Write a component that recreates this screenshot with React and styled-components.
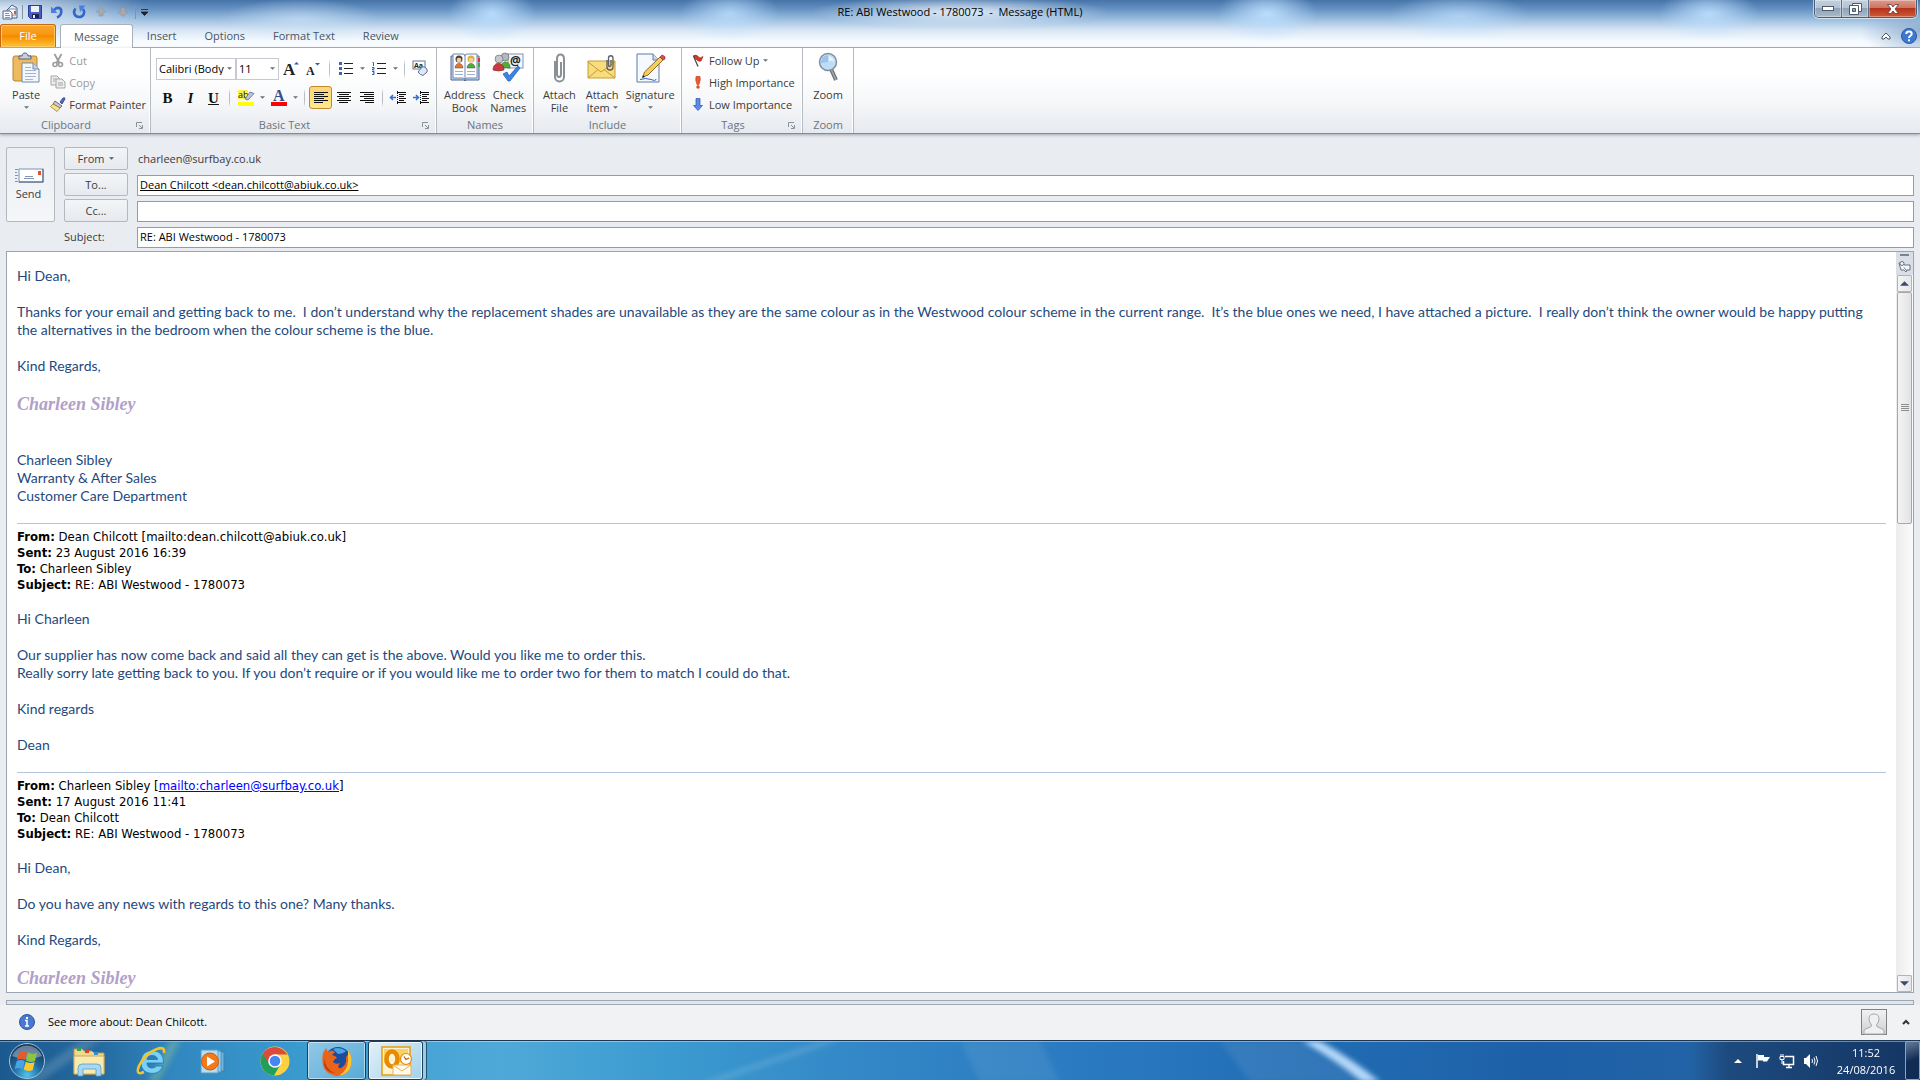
import React, { Fragment, useState } from 'react';
import styled, { createGlobalStyle, css } from 'styled-components';

const UI_FONT = `'Open Sans', 'Noto Sans', sans-serif`;
const BODY_FONT = `Lato, 'Open Sans', sans-serif`;
const HEADER_FONT = `'DejaVu Sans Condensed', 'DejaVu Sans', sans-serif`;

const GlobalStyle = createGlobalStyle`
    * {
        box-sizing: border-box;
    }

    body {
        margin: 0;
        font-family: ${UI_FONT};
        font-size: 11px;
        line-height: 13px;
        color: #3b3b3b;
        background: #e9ecf1;
    }

    button, input, select {
        font: inherit;
        color: inherit;
        margin: 0;
    }

    svg {
        display: block;
        flex: none;
        overflow: visible;
    }
`;

const Window = styled.div`
    display: flex;
    flex-direction: column;
    height: 100vh;
    overflow: hidden;
`;

/* Title bar and tabs */

const Glass = styled.header`
    display: flex;
    flex-direction: column;
    border-bottom: 1px solid #a9b0b9;
    background:
        radial-gradient(ellipse 150px 34px at 0% 12px, rgba(240, 246, 252, 0.9), rgba(230, 240, 250, 0) 100%),
        radial-gradient(ellipse 44px 28px at 492px 14px, rgba(190, 224, 255, 0.9), rgba(190, 224, 255, 0)),
        radial-gradient(ellipse 80px 22px at 300px 20px, rgba(200, 224, 246, 0.7), rgba(190, 224, 255, 0)),
        radial-gradient(ellipse 50px 26px at 38% 14px, rgba(190, 224, 255, 0.8), rgba(190, 224, 255, 0)),
        radial-gradient(ellipse 150px 16px at 50% 12px, rgba(236, 243, 250, 0.9), rgba(236, 243, 250, 0)),
        radial-gradient(ellipse 50px 28px at 66% 14px, rgba(190, 224, 255, 0.95), rgba(190, 224, 255, 0)),
        radial-gradient(ellipse 70px 24px at 76% 16px, rgba(190, 224, 255, 0.7), rgba(190, 224, 255, 0)),
        radial-gradient(ellipse 50px 26px at 89% 14px, rgba(190, 224, 255, 0.9), rgba(190, 224, 255, 0)),
        radial-gradient(ellipse 60px 30px at 100% 30px, rgba(140, 172, 206, 0.9), rgba(140, 172, 206, 0)),
        linear-gradient(#4674a9, #6793c3 20%, #9dbfe0 42%, #d8e6f4 64%, #f4f9fe 86%, #fbfdff);
`;

const TitleRow = styled.div`
    display: grid;
    grid-template-columns: 1fr auto 1fr;
    height: 24px;
`;

const QuickAccess = styled.div`
    display: flex;
    align-items: center;
    gap: 2px;
`;

const QuickButton = styled.button`
    display: flex;
    align-items: center;
    justify-content: center;
    width: ${props => props.$narrow ? '13px' : '20px'};
    height: 22px;
    padding: 0;
    border: 0;
    background: none;
    cursor: pointer;
`;

const QuickDivider = styled.span`
    width: 1px;
    height: 14px;
    background: #7d93ad;
`;

const Title = styled.h1`
    margin: 0;
    font-size: 11px;
    font-weight: 400;
    line-height: 24px;
    color: #000;
    white-space: pre;
`;

const WindowControls = styled.div`
    display: flex;
    justify-self: end;
    height: 18px;
    margin-right: 3px;
    border: 1px solid #4b5c70;
    border-top: 0;
    border-radius: 0 0 5px 5px;
    box-shadow: 0 0 0 1px rgba(255, 255, 255, 0.6);
    overflow: hidden;
`;

const ControlButton = styled.button`
    display: flex;
    align-items: center;
    justify-content: center;
    width: ${props => props.$close ? '47px' : '27px'};
    padding: 0;
    border: 0;
    border-right: ${props => props.$close ? '0' : '1px solid #5e6f84'};
    box-shadow: inset 0 0 0 1px rgba(255, 255, 255, 0.35);
    background: ${props => props.$close
        ? 'linear-gradient(#dc9a8c, #cd7460 46%, #b4331c 50%, #cf5a37)'
        : 'linear-gradient(#c3d0de, #b4c3d4 46%, #8fa2b8 50%, #a9bacb)'};
`;

const TabRow = styled.div`
    display: flex;
    height: 23px;
`;

const Tab = styled.button`
    padding: 0 13px;
    border: 1px solid transparent;
    border-bottom: 0;
    border-radius: 3px 3px 0 0;
    background: none;
    font-size: 11px;
    line-height: 22px;
    color: #4a5560;
    cursor: pointer;

    ${props => props.$active && css`
        height: 24px;
        border-color: #a9b0b9;
        background: #fff;
    `}

    ${props => props.$file && css`
        width: 56px;
        margin-right: 4px;
        border-color: #c96a10;
        background: linear-gradient(#f9a52c, #f79a14 40%, #f58a00 50%, #ffc435);
        box-shadow: inset 0 0 0 1px rgba(255, 214, 120, 0.7);
        color: #fff;
    `}
`;

const TabTools = styled.div`
    display: flex;
    align-items: center;
    gap: 10px;
    margin-left: auto;
    padding-right: 3px;
`;

const PlainButton = styled.button`
    display: flex;
    padding: 0;
    border: 0;
    background: none;
    cursor: pointer;
`;

/* Ribbon */

const Ribbon = styled.div`
    display: flex;
    height: 86px;
    flex: none;
    border-bottom: 1px solid #868b91;
    box-shadow: 0 1px 3px rgba(90, 98, 110, 0.5);
    background: linear-gradient(#fff 30%, #f6f7f9 65%, #e6e9ee);
`;

const Group = styled.section`
    display: flex;
    flex-direction: column;
    width: ${props => props.$width}px;
    border-right: 1px solid #b6bac1;
    box-shadow: inset -1px 0 0 #fff;
`;

const GroupBody = styled.div`
    display: flex;
    flex: 1;
    padding: ${props => props.$pad};
`;

const GroupTitle = styled.footer`
    display: flex;
    align-items: center;
    height: 17px;
    padding-right: ${props => props.$launcher ? '4px' : '0'};
    color: #6b7480;
    font-size: 11px;
`;

const GroupName = styled.span`
    flex: 1;
    text-align: center;
`;

const LauncherButton = styled.button`
    display: flex;
    justify-content: center;
    width: 14px;
    padding: 2px 0 0;
    border: 0;
    background: none;
    cursor: pointer;
`;

const LargeButton = styled.button`
    display: flex;
    flex-direction: column;
    align-items: center;
    flex: ${props => props.$grow || 1} 1 0;
    gap: 4px;
    padding: 3px 0 0;
    border: 0;
    background: none;
    line-height: 13px;
    white-space: nowrap;
    cursor: pointer;
`;

const LargeLabel = styled.span`
    display: flex;
    flex-direction: column;
    align-items: center;
`;

const LabelLine = styled.span`
    display: flex;
    align-items: center;
    gap: 3px;
    min-height: 13px;
`;

const SmallStack = styled.div`
    display: flex;
    flex-direction: column;
`;

const SmallButton = styled.button`
    display: flex;
    align-items: center;
    gap: 3px;
    height: 22px;
    padding: 0 3px;
    border: 0;
    background: none;
    white-space: nowrap;
    cursor: pointer;

    &:disabled {
        color: #9a9a9a;
        cursor: auto;
    }
`;

const SmallIcon = styled.span`
    display: flex;
    justify-content: center;
    width: 16px;
`;

const ToolRows = styled.div`
    display: flex;
    flex-direction: column;
    gap: 6px;
`;

const ToolRow = styled.div`
    display: flex;
    align-items: center;
    height: 23px;
`;

const ToolButton = styled.button`
    display: flex;
    align-items: center;
    justify-content: center;
    width: ${props => props.$arrow ? '10px' : '23px'};
    height: 23px;
    padding: 0;
    border: 1px solid ${props => props.$pressed ? '#c28a30' : 'transparent'};
    border-radius: 3px;
    background: ${props => props.$pressed ? 'linear-gradient(#fbd57e, #fde07c 60%, #ffe98f)' : 'none'};
    cursor: pointer;
`;

const Letter = styled.span`
    font-family: 'Liberation Serif', serif;
    font-size: 15px;
    font-weight: 700;
    font-style: ${props => props.$italic ? 'italic' : 'normal'};
    text-decoration: ${props => props.$underline ? 'underline' : 'none'};
    line-height: 18px;
    color: #111;
`;

const ToolDivider = styled.span`
    width: 1px;
    height: 20px;
    margin: 0 4px;
    background: linear-gradient(#fff, #b9bec6 30%, #b9bec6 70%, #fff);
`;

const Combo = styled.label`
    display: flex;
    align-items: center;
    width: ${props => props.$width}px;
    height: 22px;
    padding-right: 3px;
    border: 1px solid #c6cad0;
    background: #fff;
`;

const ComboSelect = styled.select`
    flex: 1;
    min-width: 0;
    padding: 0 0 0 2px;
    border: 0;
    outline: 0;
    appearance: none;
    background: none;
    color: #000;
    text-overflow: clip;
`;

/* Message envelope */

const Envelope = styled.div`
    display: grid;
    grid-template-columns: 49px 64px 1fr;
    column-gap: 9px;
    padding: 13px 6px 3px;
`;

const SendButton = styled.button`
    display: flex;
    flex-direction: column;
    align-items: center;
    justify-content: center;
    gap: 4px;
    height: 75px;
    padding: 0 4px 2px 0;
    border: 1px solid #b4b9be;
    border-radius: 2px;
    background: linear-gradient(#eceff3, #f4f6f8);
    cursor: pointer;
`;

const Fields = styled.div`
    grid-column: 2 / 4;
    display: grid;
    grid-template-columns: 64px 1fr;
    column-gap: 9px;
    row-gap: 3px;
`;

const FieldButton = styled.button`
    display: flex;
    align-items: center;
    justify-content: center;
    gap: 5px;
    height: 23px;
    padding: 0;
    border: 1px solid #b4b9be;
    border-radius: 2px;
    background: linear-gradient(#f4f5f7, #e6eaee);
    cursor: pointer;
`;

const FieldLabel = styled.label`
    align-self: center;
    line-height: 23px;
`;

const FieldText = styled.span`
    align-self: center;
    padding: 0 0 1px 1px;
`;

const FieldInput = styled.input`
    align-self: end;
    width: 100%;
    height: 21px;
    padding: 0 2px 2px;
    border: 1px solid #989ca2;
    outline: 0;
    background: #fff;
    color: #000;
    font-size: 11px;
    text-decoration: ${props => props.$resolved ? 'underline' : 'none'};
`;

/* Message editor */

const Editor = styled.main`
    display: flex;
    flex: 1;
    min-height: 0;
    margin: 0 6px;
    border: 1px solid #9ca4af;
    background: #fff;
`;

const Letterpaper = styled.article`
    flex: 1;
    min-width: 0;
    overflow: hidden;
    padding: 15px 10px 0;
    font-family: ${BODY_FONT};
    font-size: 14px;
    line-height: 18px;
    color: #1f497d;

    & p {
        margin: 0 0 18px;
        white-space: pre-wrap;
    }
`;

const Signature = styled.div`
    margin-bottom: ${props => props.$last ? '0' : '36px'};
    font-family: 'Monotype Corsiva', 'Liberation Serif', serif;
    font-size: 18px;
    font-style: italic;
    font-weight: 700;
    line-height: 22px;
    color: #b1a0c7;
`;

const Quote = styled.div`
    margin-bottom: 17px;
    padding-top: 5px;
    border-top: 1px solid #b5c4df;
    font-family: ${HEADER_FONT};
    font-size: 13px;
    line-height: 16px;
    color: #000;

    & a {
        color: #00f;
    }
`;

const ScrollBar = styled.div`
    display: flex;
    flex-direction: column;
    width: 17px;
    background: linear-gradient(90deg, #ececee, #fbfbfb);
`;

const ScrollTools = styled.div`
    display: flex;
    flex-direction: column;
    align-items: center;
    gap: 4px;
    height: 23px;
    padding-top: 2px;
    background: #d9dfe7;
`;

const ScrollButton = styled.button`
    display: flex;
    align-items: center;
    justify-content: center;
    width: 15px;
    height: 17px;
    margin-left: 1px;
    padding: 0;
    border: 1px solid #b2b4b8;
    border-radius: 1px;
    background: linear-gradient(90deg, #f5f5f6, #e5e6e8);
`;

const ScrollTrack = styled.div`
    flex: 1;
`;

const ScrollThumb = styled.div`
    display: flex;
    align-items: center;
    justify-content: center;
    width: 15px;
    height: 34%;
    margin-left: 1px;
    border: 1px solid #a6a8ac;
    border-radius: 2px;
    background: linear-gradient(90deg, #f4f4f5, #e2e3e5);
`;

/* People pane */

const Splitter = styled.div`
    height: 5px;
    margin: 7px 6px 0;
    border: 1px solid #9fa8b2;
    background: #dfe5ec;
`;

const PeoplePane = styled.aside`
    display: flex;
    align-items: center;
    height: 35px;
    flex: none;
    padding: 0 10px 2px 19px;
    background: #f1f2f4;
    color: #000;
`;

const PeopleText = styled.span`
    flex: 1;
    padding-left: 13px;
`;

const Avatar = styled.span`
    display: flex;
    width: 26px;
    height: 26px;
    margin-right: 15px;
    border: 1px solid #7f8184;
    background: linear-gradient(#f2f2f2, #cfd0d2);
`;

/* Taskbar */

const Taskbar = styled.nav`
    position: relative;
    display: flex;
    height: 40px;
    flex: none;
    border-top: 1px solid #1c3652;
    overflow: hidden;
    color: #fff;
`;

const Wallpaper = styled.svg`
    position: absolute;
    inset: 0;
    width: 100%;
    height: 100%;
`;

const TaskButton = styled.button`
    position: relative;
    display: flex;
    align-items: center;
    justify-content: center;
    width: ${props => props.$start ? '54px' : '62px'};
    margin-right: ${props => props.$start ? '4px' : '0'};
    padding: 0;
    border: 0;
    background: none;
    cursor: pointer;

    ${props => props.$open && css`
        width: 59px;
        margin: 0 1px;
        border: 1px solid #1a3f5e;
        border-radius: 3px;
        box-shadow: inset 0 0 0 1px rgba(255, 255, 255, 0.5);
        background: linear-gradient(135deg, rgba(255, 255, 255, 0.45), rgba(255, 255, 255, 0.12));
    `}

    ${props => props.$current && css`
        width: 55px;
        background: linear-gradient(135deg, rgba(255, 255, 255, 0.85), rgba(255, 255, 255, 0.5));
        box-shadow: inset 0 0 0 1px rgba(255, 255, 255, 0.8), 3px 0 0 #9ccbe6, 4px 0 0 #24506f;
    `}
`;

const Tray = styled.div`
    position: relative;
    display: flex;
    align-items: center;
    margin-left: auto;
`;

const TrayIcons = styled.div`
    display: flex;
    align-items: center;
    gap: 8px;
`;

const TrayToggle = styled.button`
    display: flex;
    padding: 0 5px 0 0;
    border: 0;
    background: none;
    cursor: pointer;
`;

const Clock = styled.time`
    width: 78px;
    margin-left: 8px;
    text-align: center;
    line-height: 17px;
`;

const ShowDesktop = styled.button`
    width: 15px;
    height: 100%;
    padding: 0;
    border: 1px solid #8da4bd;
    border-radius: 2px;
    background: linear-gradient(160deg, rgba(255, 255, 255, 0.35), rgba(10, 30, 60, 0.4) 50%);
`;

/* Icons */

const Arrow = ({ color = '#6a6f77', up, width = 5 }) => (
    <svg width={width} height={Math.ceil(width / 2)} viewBox="0 0 6 3" aria-hidden="true">
        <path d={up ? 'M0 3L3 0L6 3Z' : 'M0 0H6L3 3Z'} fill={color} />
    </svg>
);

const MailIcon = () => (
    <svg width="18" height="16" viewBox="0 0 18 16">
        <path d="M6 6L11 1L16 4V14H6Z" fill="#e9eff8" stroke="#4d6488" />
        <path d="M8 5H15V11H8Z" fill="#fff" stroke="#8193b0" />
        <rect x="13" y="7" width="2" height="3" fill="#e2502c" />
        <path d="M2 7H9L11 9V15H2Z" fill="#f7faff" stroke="#4d6488" />
        <path d="M4 9.500H8M4 11.500H9M4 13.500H9" stroke="#7d94b8" />
    </svg>
);

const SaveIcon = () => (
    <svg width="14" height="14" viewBox="0 0 14 14">
        <path d="M0.500 0.500H13.500V13.500H2.500L0.500 11.500Z" fill="#4a5fc4" stroke="#2b3b96" />
        <rect x="3" y="1" width="8" height="6" fill="#eef3fb" />
        <rect x="4" y="9" width="7" height="4" fill="#20254a" />
        <rect x="5" y="10" width="2" height="3" fill="#e8ecf6" />
    </svg>
);

const UndoIcon = () => (
    <svg width="14" height="14" viewBox="0 0 14 14">
        <path d="M3.500 6C6 1.500 11.500 2 11.300 6.500C11.200 9.500 9.500 11.500 7 12.500" fill="none" stroke="#3468c8" strokeWidth="2.600" />
        <path d="M1 1.500V8H7.500Z" fill="#4a80dc" />
    </svg>
);

const RedoIcon = () => (
    <svg width="14" height="14" viewBox="0 0 14 14">
        <path d="M3.500 3.500C0.500 7 2.500 12 7 12C11.500 12 13.500 7.500 11 4" fill="none" stroke="#3468c8" strokeWidth="2.600" />
        <path d="M7 0.500H13.500L8 7Z" fill="#4a80dc" />
    </svg>
);

const NavArrowIcon = ({ down }) => (
    <svg width="12" height="10" viewBox="0 0 12 10">
        <path d={down ? 'M4 1H8V5H11L6 9.500L1 5H4Z' : 'M4 9H8V5H11L6 0.500L1 5H4Z'} fill="#a9a9ad" stroke="#8d8f95" strokeWidth="0.500" />
    </svg>
);

const HelpIcon = () => (
    <svg width="16" height="16" viewBox="0 0 16 16">
        <circle cx="8" cy="8" r="7.500" fill="#3f78d2" stroke="#2859a8" />
        <path d="M5.300 6C5.300 2.800 10.700 2.800 10.700 6C10.700 7.800 8 7.800 8 10" fill="none" stroke="#fff" strokeWidth="2" />
        <rect x="7" y="11.300" width="2" height="2" fill="#fff" />
    </svg>
);

const ChevronIcon = () => (
    <svg width="8" height="6" viewBox="0 0 8 6">
        <path d="M1 5L4 2L7 5" fill="none" stroke="#2e333a" strokeWidth="2" />
    </svg>
);

const CollapseIcon = () => (
    <svg width="10" height="8" viewBox="0 0 10 8">
        <path d="M5 1L9 5V7H7L5 5L3 7H1V5Z" fill="#fff" stroke="#4c545e" />
    </svg>
);

const PasteIcon = () => (
    <svg width="28" height="32" viewBox="0 0 28 32">
        <rect x="1" y="4" width="24" height="25" rx="2" fill="#efba5e" stroke="#b98531" />
        <path d="M7 7V4H10C10 0 16 0 16 4H19V7Z" fill="#c9ced6" stroke="#596270" />
        <path d="M10 11H21L27 17V30H10Z" fill="#f3f7fc" stroke="#7389ab" />
        <path d="M21 11V17H27" fill="#c9d7ec" stroke="#7389ab" />
        <path d="M13 15.500H19M13 18.500H24M13 21.500H24M13 24.500H24M13 27.500H21" stroke="#a3b5d0" />
    </svg>
);

const CutIcon = () => (
    <svg width="12" height="15" viewBox="0 0 12 15" fill="none" stroke="#9a9c9f">
        <path d="M2.500 1L7.500 10M9.500 1L4.500 10" strokeWidth="1.800" />
        <circle cx="3" cy="11.500" r="2" strokeWidth="1.600" />
        <circle cx="8.500" cy="11.500" r="2" strokeWidth="1.600" />
    </svg>
);

const CopyIcon = () => (
    <svg width="16" height="14" viewBox="0 0 16 14" stroke="#a6a6a6" fill="#ededed">
        <path d="M1 1H7L9 3V10H1Z" />
        <path d="M6 4H12L15 7V13H6Z" />
        <path d="M3 4H6M3 6H5M8 8H13M8 10H13" />
    </svg>
);

const PainterIcon = () => (
    <svg width="16" height="15" viewBox="0 0 16 15">
        <path d="M10 5L13 1Q15 0 15 2L12 7Z" fill="#5468c9" stroke="#2d3a86" strokeWidth="0.800" />
        <path d="M5 4L12 9L10 11L3 7Z" fill="#c4c8ce" stroke="#555" strokeWidth="0.800" />
        <path d="M3 7L10 11L7 14.500L0.500 9.500Z" fill="#f7e29a" stroke="#a37d23" strokeWidth="0.800" />
    </svg>
);

const LauncherIcon = () => (
    <svg width="7" height="7" viewBox="0 0 7 7" stroke="#8b9097" fill="none">
        <path d="M0.500 5V0.500H6M3 3L6 6M6.500 3V6.500H3" />
    </svg>
);

const BulletsIcon = ({ numbered }) => (
    <svg width="14" height="13" viewBox="0 0 14 13">
        <path d="M5 1.500H14M5 6.500H14M5 11.500H14" stroke="#222" />
        {numbered
            ? <path d="M0.500 0.500H1.500V4M0 5.500H2V7H0.500V8H2.500M0 9.500H2V12.500H0M1 11H2" stroke="#2b5fb5" fill="none" />
            : <path d="M0 0H3V3H0ZM0 5H3V8H0ZM0 10H3V13H0Z" fill="#3a66b0" />}
    </svg>
);

const ClearIcon = () => (
    <svg width="17" height="17" viewBox="0 0 17 17">
        <rect x="1" y="1" width="12" height="8" fill="#fff" stroke="#63779b" />
        <text x="2" y="8" fontSize="7" fontWeight="700" fill="#222">Aa</text>
        <path d="M6 12L10 7Q12 6 14 8Q16 10 15 12L11 15.500Q8 15 6 12Z" fill="#dfe6f6" stroke="#5f6f9a" />
    </svg>
);

const HighlightIcon = () => (
    <svg width="16" height="17" viewBox="0 0 16 17">
        <rect x="0" y="1" width="10" height="9" fill="#ffef4a" />
        <text x="0" y="9" fontSize="9" fill="#111">ab</text>
        <path d="M7 10L12 3L16 4.500L10 11Z" fill="#b9c4de" stroke="#5b6c94" strokeWidth="0.800" />
        <rect x="0" y="13" width="16" height="4" fill="#ff0" />
    </svg>
);

const FontColorIcon = () => (
    <svg width="16" height="17" viewBox="0 0 16 17">
        <text x="2" y="12" fontSize="16" fontWeight="700" fontFamily="Liberation Serif" fill="#2f4f8f">A</text>
        <rect x="0" y="13" width="16" height="4" fill="#f00" />
    </svg>
);

const ALIGN_LINES = {
    left: 'M0 1.500H14M0 3.500H10M0 5.500H14M0 7.500H10M0 9.500H14M0 11.500H9',
    center: 'M0 1.500H14M2 3.500H12M0 5.500H14M2 7.500H12M0 9.500H14M2 11.500H11',
    right: 'M0 1.500H14M4 3.500H14M0 5.500H14M4 7.500H14M0 9.500H14M5 11.500H14',
};

const AlignIcon = ({ side }) => (
    <svg width="14" height="13" viewBox="0 0 14 13">
        <path d={ALIGN_LINES[side]} stroke="#111" />
    </svg>
);

const IndentIcon = ({ right }) => (
    <svg width="17" height="14" viewBox="0 0 17 14">
        <path d="M7 1.500H16M9 3.500H16M9 5.500H14M9 7.500H16M9 9.500H14M7 11.500H16" stroke="#111" />
        <path d="M7.500 0V14" stroke="#111" strokeDasharray="1 1" />
        <path d={right ? 'M0 6.500H5M3 4L5.500 6.500L3 9' : 'M6 6.500H1M3 4L0.500 6.500L3 9'} stroke="#2f6fd0" strokeWidth="1.500" fill="none" />
    </svg>
);

const GrowIcon = ({ shrink }) => (
    <svg width="16" height="15" viewBox="0 0 16 15">
        <text x="0" y="14" fontSize={shrink ? 12 : 17} fontWeight="700" fontFamily="Liberation Serif" fill="#222">A</text>
        <path d={shrink ? 'M9 2H14L11.500 4.500Z' : 'M11 3.500H16L13.500 1Z'} fill="#2c5cab" />
    </svg>
);

const Person = ({ x, y, shirt, hair }) => (
    <g transform={`translate(${x} ${y})`}>
        <path d="M0 13C0 7 8 7 8 13Z" fill={shirt} stroke="#444" strokeWidth="0.500" />
        <circle cx="4" cy="4" r="3.500" fill={hair} />
        <circle cx="4" cy="5" r="2.300" fill="#f3cda6" />
    </g>
);

const AddressBookIcon = () => (
    <svg width="32" height="32" viewBox="0 0 32 32">
        <path d="M2 4H30V28H17L16 29L15 28H2Z" fill="#c9d8ef" stroke="#4c6591" />
        <path d="M4 2H14Q16 2 16 4Q16 2 18 2H28V26H18Q16 26 16 28Q16 26 14 26H4Z" fill="#fff" stroke="#6f86ad" />
        <path d="M16 4V28" stroke="#6f86ad" />
        <path d="M29 6H31V10H29Z" fill="#d33" />
        <path d="M29 11H31V15H29Z" fill="#48a648" />
        <Person x={6} y={3} shirt="#ec7427" hair="#4a423d" />
        <Person x={18} y={3} shirt="#52ac3b" hair="#d4b23a" />
        <path d="M6 19.500H14M6 22.500H14M18 19.500H26M18 22.500H26" stroke="#9bb0d0" />
    </svg>
);

const CheckNamesIcon = () => (
    <svg width="32" height="32" viewBox="0 0 32 32">
        <rect x="16" y="2" width="15" height="14" fill="#f3f7fd" stroke="#7d93b8" />
        <circle cx="13" cy="5" r="4" fill="#b3b6ba" stroke="#606468" strokeWidth="0.600" />
        <path d="M9 16C8 8 19 8 18 16Z" fill="#51ab3e" stroke="#2f7a20" strokeWidth="0.600" />
        <circle cx="7" cy="7" r="4" fill="#c5c7ca" stroke="#606468" strokeWidth="0.600" />
        <path d="M1 18C1 9 12 9 12 18Q6 20 1 18Z" fill="#c83a3e" stroke="#8d2024" strokeWidth="0.600" />
        <text x="18" y="13" fontSize="12" fontWeight="700" fill="#222">@</text>
        <path d="M11 22L15 20L17 24L26 14L28 16L18 29H16Z" fill="#3b86e4" stroke="#1c57ad" strokeWidth="0.700" />
    </svg>
);

const ClipIcon = () => (
    <svg width="32" height="32" viewBox="0 0 32 32" fill="none" stroke="#8b9096" strokeWidth="2">
        <path d="M12 9V25C12 31 21 31 21 25V7C21 1 14 1 14 7V22C14 26 18 26 18 22V10" />
    </svg>
);

const AttachItemIcon = () => (
    <svg width="32" height="32" viewBox="0 0 32 32">
        <path d="M2 9H29V26H2Z" fill="#f9dc7c" stroke="#c79b35" />
        <path d="M2 10L15 20L29 10M2 26L12 17.500M29 26L18 17.500" stroke="#c79b35" fill="none" />
        <path d="M21 8V15C21 19 27 19 27 15V6C27 3 22.500 3 22.500 6V13C22.500 15 25 15 25 13V8" fill="none" stroke="#59616c" strokeWidth="1.300" />
    </svg>
);

const SignatureIcon = () => (
    <svg width="32" height="32" viewBox="0 0 32 32">
        <path d="M3 2H19L25 8V30H3Z" fill="#f6f9fd" stroke="#5f7ba8" />
        <path d="M19 2V8H25" fill="#cfdcef" stroke="#5f7ba8" />
        <path d="M9 25L10.500 20L26 5L29 8L14 23Z" fill="#f5cd61" stroke="#8c6b24" />
        <path d="M26 5L28 3Q32 4 31 7L29 8Z" fill="#d9525b" stroke="#7f3137" strokeWidth="0.700" />
        <path d="M8 26L9 23L11 25Z" fill="#222" />
        <path d="M6 27.500Q12 25.500 17 27.500T22 27" stroke="#3563b4" fill="none" />
    </svg>
);

const FlagIcon = () => (
    <svg width="12" height="13" viewBox="0 0 12 13">
        <path d="M1 2Q4 0 6 2.500T11 2.500Q10 5 9 7Q7 8 5 6Z" fill="#d33a20" stroke="#8f1d10" strokeWidth="0.600" />
        <path d="M1.500 2L6 12.500" stroke="#4a4a4a" strokeWidth="1.300" />
    </svg>
);

const HighIcon = () => (
    <svg width="12" height="13" viewBox="0 0 12 13">
        <path d="M4 0.500H8Q9 4 7 8.500H5Q3 4 4 0.500Z" fill="#f05a28" stroke="#b83212" strokeWidth="0.600" />
        <circle cx="6" cy="11" r="1.700" fill="#e2481d" />
    </svg>
);

const LowIcon = () => (
    <svg width="12" height="13" viewBox="0 0 12 13">
        <path d="M4 0.500H8V7.500H10.500L6 12.500L1.500 7.500H4Z" fill="#5a8be6" stroke="#2a54ad" strokeWidth="0.700" />
    </svg>
);

const ZoomIcon = () => (
    <svg width="32" height="32" viewBox="0 0 32 32">
        <path d="M19 17L24 28" stroke="#6c6f76" strokeWidth="4" />
        <path d="M19 17L24 28" stroke="#a6a9b0" strokeWidth="1.500" />
        <circle cx="16" cy="10" r="8.500" fill="#bfdcf8" stroke="#868d98" strokeWidth="1.500" />
        <path d="M9 11Q9 4 16 3V10Z" fill="#9cc3ee" />
        <path d="M17 4Q22 6 22 10Q20 8 17 9Z" fill="#e9f4fe" />
    </svg>
);

const SendIcon = () => (
    <svg width="30" height="15" viewBox="0 0 30 15">
        <path d="M1 1.500H4M1 4.500H3M1 7.500H4M1 10.500H3M1 13.500H4" stroke="#8395b5" />
        <rect x="5" y="1" width="24" height="13" fill="#fff" stroke="#7a8fb4" />
        <path d="M5 14H29V1" fill="none" stroke="#465b80" />
        <rect x="24" y="3" width="3" height="4" fill="#e2502c" />
        <path d="M11 8.500H19M10 10.500H20" stroke="#8395b5" />
    </svg>
);

const SelectBrowseIcon = () => (
    <svg width="13" height="13" viewBox="0 0 13 13" fill="#f6f7f9" stroke="#6b717b">
        <path d="M1 3H5L6 5H12V10H9L8 12L6 10H3Z" />
        <circle cx="4" cy="3.500" r="2" />
        <path d="M6 7.500L9 11" />
    </svg>
);

const GripIcon = () => (
    <svg width="8" height="8" viewBox="0 0 8 8">
        <path d="M0 0.500H8M0 2.500H8M0 4.500H8M0 6.500H8" stroke="#8c8e92" />
    </svg>
);

const InfoIcon = () => (
    <svg width="16" height="16" viewBox="0 0 16 16">
        <circle cx="8" cy="8" r="7.500" fill="#4878cf" stroke="#2f57a4" />
        <rect x="7" y="3" width="2" height="2" fill="#fff" />
        <path d="M6 6.500H8V11.500M6 12H10" stroke="#fff" strokeWidth="1.500" fill="none" />
    </svg>
);

const AvatarIcon = () => (
    <svg width="24" height="24" viewBox="0 0 24 24">
        <path d="M2 24V21Q2 19 6 18Q10 17 9.500 15Q7 12 7 9Q7 4 12 4T17 9Q17 12 14.500 15Q14 17 18 18Q22 19 22 21V24Z" fill="#f0f0f1" stroke="#a7a8aa" />
    </svg>
);

const StartIcon = () => (
    <svg width="38" height="38" viewBox="0 0 38 38">
        <defs>
            <radialGradient id="orb" cx="50%" cy="90%" r="80%">
                <stop offset="0" stopColor="#4fc3ee" />
                <stop offset="0.500" stopColor="#1f6a9f" />
                <stop offset="1" stopColor="#17395e" />
            </radialGradient>
        </defs>
        <circle cx="19" cy="19" r="17.500" fill="url(#orb)" stroke="#9fc4dd" />
        <path d="M4 14A16 16 0 0 1 34 14Q19 20 4 14Z" fill="#fff" opacity="0.350" />
        <path d="M11 11Q15 8 19 10L17 18Q13 16 9 18Z" fill="#ea5a26" />
        <path d="M20 10.500Q24 13 29 11L27 19Q22 21 18 18.500Z" fill="#8cc63e" />
        <path d="M8.700 19Q13 17 16.700 19L14.700 27Q11 25 6.700 27Z" fill="#4aa3e4" />
        <path d="M17.700 19.700Q22 22 26.700 20L24.700 28Q20 30 15.700 27.500Z" fill="#fcc92c" />
    </svg>
);

const ExplorerIcon = () => (
    <svg width="34" height="32" viewBox="0 0 34 32">
        <path d="M2 4H10L12 6H20L22 8H32V29H2Z" fill="#f0d98a" stroke="#b99a44" />
        <rect x="5" y="3" width="4" height="3" fill="#2ba84a" />
        <rect x="13" y="5" width="4" height="3" fill="#d8432c" />
        <rect x="22" y="7" width="4" height="3" fill="#2f8fd8" />
        <path d="M2 11H32V29H2Z" fill="#f9eab0" stroke="#c8ac5c" />
        <path d="M6 31V23Q6 19 10 19H25Q29 19 29 23V31H24V24H11V31Z" fill="#a7d8f2" stroke="#5a9cc6" strokeWidth="0.800" />
    </svg>
);

const ExplorerBrowserIcon = () => (
    <svg width="32" height="32" viewBox="0 0 32 32">
        <path d="M28.500 18H12Q12 23 17 23Q20 23 21.500 21H28Q25 28.500 17 28.500Q6 28 6 17Q6 6 17 5.500Q29 6 28.500 18ZM12 14.500H22.500Q22 10.500 17.200 10.500T12 14.500Z" fill="#7ccff6" stroke="#1c77b8" strokeWidth="0.800" />
        <path d="M29 8Q30 1 22 4Q10 8 4 21Q0 31 9 27" fill="none" stroke="#f4c52a" strokeWidth="2.600" />
    </svg>
);

const MediaIcon = () => (
    <svg width="26" height="26" viewBox="0 0 26 26">
        <path d="M8 4H24V23H8Z" fill="#6eb3da" stroke="#3a84b4" />
        <path d="M5 3H21V24H5Z" fill="#9fd0ea" stroke="#4a93c0" />
        <path d="M1 2H18V25H1Z" fill="#b9dbee" stroke="#5a9cc6" />
        <circle cx="10" cy="13.500" r="8.500" fill="#f27a1a" stroke="#cf5c08" />
        <path d="M7 8.500L15 13.500L7 18.500Z" fill="#fff" />
    </svg>
);

const ChromeIcon = () => (
    <svg width="30" height="30" viewBox="0 0 30 30">
        <circle cx="15" cy="15" r="14.500" fill="#fdd23e" />
        <path d="M15 15L2.500 7.700A14.500 14.500 0 0 0 14 29.500L20.600 18.300Z" fill="#1fa05a" />
        <path d="M15 8.500H28L27 8A14.500 14.500 0 0 0 2.500 7.700L9.400 18.200Z" fill="#dd4a3c" />
        <circle cx="15" cy="15" r="6.800" fill="#fff" />
        <circle cx="15" cy="15" r="5.300" fill="#4486f4" />
    </svg>
);

const FirefoxIcon = () => (
    <svg width="32" height="32" viewBox="0 0 32 32">
        <circle cx="17" cy="15" r="13" fill="#1d4c9c" />
        <path d="M12 4Q19 1 25 6Q22 9 17 9Z" fill="#47a5e2" />
        <path d="M2 8L5 3L7 7Q11 4 14 7L11 10Q15 11 16 13Q13 14 12 17Q15 20 19 18Q15 24 20 23Q26 20 25 12Q28 10 27 5Q34 15 28 25Q23 31 15 31Q3 29 1.500 18Q1 12 2 8Z" fill="#e8641b" />
        <path d="M27 5Q34 15 28 25Q24 30 18 30.500Q27 25 27 16Z" fill="#fcc431" />
        <path d="M4 13Q3 24 14 28Q6 28 3 20Z" fill="#b93a10" />
    </svg>
);

const OutlookIcon = () => (
    <svg width="32" height="32" viewBox="0 0 32 32">
        <path d="M2 2H30V30H2Z" fill="#fff3cf" stroke="#e79a10" strokeWidth="1.500" />
        <path d="M4 4H28V18H4Z" fill="#fbd264" />
        <ellipse cx="12" cy="14" rx="5.500" ry="7.500" fill="#fff3cf" stroke="#e58b06" strokeWidth="4.500" />
        <path d="M13 20H31V30H13Z" fill="#fffaf0" stroke="#eeb04c" />
        <path d="M13 20L22 26L31 20" fill="none" stroke="#eeb04c" />
        <circle cx="26" cy="14" r="5.500" fill="#fffdf6" stroke="#e58b06" strokeWidth="1.200" />
        <path d="M24 11.500L26 14.500L29 13" fill="none" stroke="#b8560c" strokeWidth="1.200" />
    </svg>
);

const TrayFlagIcon = () => (
    <svg width="16" height="16" viewBox="0 0 16 16">
        <path d="M2 1V15" stroke="#fff" strokeWidth="1.500" />
        <path d="M3 2H9V4H15L12 8.500H8V7.500H3Z" fill="#fff" />
    </svg>
);

const NetworkIcon = () => (
    <svg width="16" height="16" viewBox="0 0 16 16" fill="none" stroke="#fff">
        <path d="M6 3.500H14.500V11.500H4.500V8M7 14.500H13M10 12V14" strokeWidth="1.500" />
        <path d="M1 3.500H5V6.500H1ZM2 1V3M4 1V3M3 7V11" />
    </svg>
);

const SpeakerIcon = () => (
    <svg width="16" height="16" viewBox="0 0 16 16">
        <path d="M1 5H3L7 1V15L3 11H1Z" fill="#fff" />
        <path d="M9 6Q10 8 9 10M11 4.500Q13 8 11 11.500M13 3Q16 8 13 13" stroke="#fff" fill="none" />
    </svg>
);

const GroupFoot = ({ title, launcher }) => (
    <GroupTitle $launcher={launcher}>
        <GroupName>{title}</GroupName>
        {launcher && <LauncherButton aria-label={`${title} settings`}><LauncherIcon /></LauncherButton>}
    </GroupTitle>
);

const Large = ({ icon, lines, arrow, grow }) => (
    <LargeButton $grow={grow}>
        {icon}
        <LargeLabel>
            {lines.map((line, i) => (
                <LabelLine key={line}>
                    {line}
                    {arrow && lines.length > 1 && i === lines.length - 1 && <Arrow />}
                </LabelLine>
            ))}
            {arrow && lines.length === 1 && <LabelLine><Arrow /></LabelLine>}
        </LargeLabel>
    </LargeButton>
);

const Small = ({ icon, children, ...rest }) => (
    <SmallButton {...rest}>
        <SmallIcon>{icon}</SmallIcon>
        {children}
    </SmallButton>
);

const Split = ({ label, children }) => (
    <Fragment>
        <ToolButton aria-label={label}>{children}</ToolButton>
        <ToolButton $arrow aria-label={`${label} options`}><Arrow /></ToolButton>
    </Fragment>
);

const BasicText = () => {
    const [align, setAlign] = useState('left');

    return (
        <Group $width={286}>
            <GroupBody $pad='9px 4px 0 5px'>
                <ToolRows>
                    <ToolRow>
                        <Combo $width={80}>
                            <ComboSelect aria-label='Font'>
                                <option>Calibri (Body</option>
                            </ComboSelect>
                            <Arrow />
                        </Combo>
                        <Combo $width={43}>
                            <ComboSelect aria-label='Font size'>
                                <option>11</option>
                            </ComboSelect>
                            <Arrow />
                        </Combo>
                        <ToolButton aria-label='Grow font'><GrowIcon /></ToolButton>
                        <ToolButton aria-label='Shrink font'><GrowIcon shrink /></ToolButton>
                        <ToolDivider />
                        <Split label='Bullets'><BulletsIcon /></Split>
                        <Split label='Numbering'><BulletsIcon numbered /></Split>
                        <ToolDivider />
                        <ToolButton aria-label='Clear formatting'><ClearIcon /></ToolButton>
                    </ToolRow>
                    <ToolRow>
                        <ToolButton><Letter>B</Letter></ToolButton>
                        <ToolButton><Letter $italic>I</Letter></ToolButton>
                        <ToolButton><Letter $underline>U</Letter></ToolButton>
                        <ToolDivider />
                        <Split label='Highlight'><HighlightIcon /></Split>
                        <Split label='Font colour'><FontColorIcon /></Split>
                        <ToolDivider />
                        {['left', 'center', 'right'].map(side => (
                            <ToolButton
                                key={side}
                                $pressed={align === side}
                                aria-label={`Align ${side}`}
                                onClick={() => setAlign(side)}
                            >
                                <AlignIcon side={side} />
                            </ToolButton>
                        ))}
                        <ToolDivider />
                        <ToolButton aria-label='Decrease indent'><IndentIcon /></ToolButton>
                        <ToolButton aria-label='Increase indent'><IndentIcon right /></ToolButton>
                    </ToolRow>
                </ToolRows>
            </GroupBody>
            <GroupFoot title='Basic Text' launcher />
        </Group>
    );
};

const TopBar = () => (
    <Glass>
        <TitleRow>
            <QuickAccess>
                <QuickButton aria-label='Window menu'><MailIcon /></QuickButton>
                <QuickDivider />
                <QuickButton aria-label='Save'><SaveIcon /></QuickButton>
                <QuickButton aria-label='Undo'><UndoIcon /></QuickButton>
                <QuickButton aria-label='Redo'><RedoIcon /></QuickButton>
                <QuickButton aria-label='Previous item'><NavArrowIcon /></QuickButton>
                <QuickButton aria-label='Next item'><NavArrowIcon down /></QuickButton>
                <QuickDivider />
                <QuickButton $narrow aria-label='Customise toolbar'>
                    <svg width="7" height="7" viewBox="0 0 7 7"><path d="M0 0.500H7M0 3H7L3.500 6.500Z" stroke="#222" strokeWidth="0.800" fill="#222" /></svg>
                </QuickButton>
            </QuickAccess>
            <Title>{'RE: ABI Westwood - 1780073  -  Message (HTML)'}</Title>
            <WindowControls>
                <ControlButton aria-label='Minimise'>
                    <svg width="12" height="5" viewBox="0 0 12 5"><rect x="0.500" y="0.500" width="11" height="4" fill="#fff" stroke="#4f5b6a" /></svg>
                </ControlButton>
                <ControlButton aria-label='Restore'>
                    <svg width="13" height="12" viewBox="0 0 13 12" fill="#fff" stroke="#4f5b6a">
                        <path d="M3.500 0.500H12.500V8.500H3.500Z" />
                        <path d="M0.500 2.500H9.500V11.500H0.500Z" />
                        <path d="M3.500 5.500H6.500V8.500H3.500Z" fill="#8fa2b8" />
                    </svg>
                </ControlButton>
                <ControlButton $close aria-label='Close'>
                    <svg width="12" height="10" viewBox="0 0 12 10"><path d="M0.500 0.500H4L6 3L8 0.500H11.500L8 5L11.500 9.500H8L6 7L4 9.500H0.500L4 5Z" fill="#fff" stroke="#5a3a3a" strokeWidth="0.800" /></svg>
                </ControlButton>
            </WindowControls>
        </TitleRow>
        <TabRow>
            <Tab $file>File</Tab>
            <Tab $active>Message</Tab>
            {['Insert', 'Options', 'Format Text', 'Review'].map(name => <Tab key={name}>{name}</Tab>)}
            <TabTools>
                <PlainButton aria-label='Minimise the ribbon'><CollapseIcon /></PlainButton>
                <PlainButton aria-label='Help'><HelpIcon /></PlainButton>
            </TabTools>
        </TabRow>
    </Glass>
);

const RibbonBar = () => (
    <Ribbon>
        <Group $width={151}>
            <GroupBody $pad='1px 1px 0 5px'>
                <Large icon={<PasteIcon />} lines={['Paste']} arrow />
                <SmallStack>
                    <Small icon={<CutIcon />} disabled>Cut</Small>
                    <Small icon={<CopyIcon />} disabled>Copy</Small>
                    <Small icon={<PainterIcon />}>Format Painter</Small>
                </SmallStack>
            </GroupBody>
            <GroupFoot title='Clipboard' launcher />
        </Group>
        <BasicText />
        <Group $width={97}>
            <GroupBody $pad='1px 3px 0 6px'>
                <Large icon={<AddressBookIcon />} lines={['Address', 'Book']} />
                <Large icon={<CheckNamesIcon />} lines={['Check', 'Names']} />
            </GroupBody>
            <GroupFoot title='Names' />
        </Group>
        <Group $width={148}>
            <GroupBody $pad='1px 4px 0'>
                <Large icon={<ClipIcon />} lines={['Attach', 'File']} grow={4} />
                <Large icon={<AttachItemIcon />} lines={['Attach', 'Item']} arrow grow={4} />
                <Large icon={<SignatureIcon />} lines={['Signature']} arrow grow={5} />
            </GroupBody>
            <GroupFoot title='Include' />
        </Group>
        <Group $width={121}>
            <GroupBody $pad='1px 4px 0 5px'>
                <SmallStack>
                    <Small icon={<FlagIcon />}>Follow Up <Arrow /></Small>
                    <Small icon={<HighIcon />}>High Importance</Small>
                    <Small icon={<LowIcon />}>Low Importance</Small>
                </SmallStack>
            </GroupBody>
            <GroupFoot title='Tags' launcher />
        </Group>
        <Group $width={51}>
            <GroupBody $pad='1px 4px 0'>
                <Large icon={<ZoomIcon />} lines={['Zoom']} />
            </GroupBody>
            <GroupFoot title='Zoom' />
        </Group>
    </Ribbon>
);

const MessageText = () => (
    <Letterpaper>
        <p>Hi Dean,</p>
        <p>
            {'Thanks for your email and getting back to me.  I don’t understand why the replacement shades are unavailable as they are the same colour as in the Westwood colour scheme in the current range.  It’s the blue ones we need, I have attached a picture.  I really don’t think the owner would be happy putting the alternatives in the bedroom when the colour scheme is the blue.'}
        </p>
        <p>Kind Regards,</p>
        <Signature>Charleen Sibley</Signature>
        <p>
            Charleen Sibley<br />
            Warranty &amp; After Sales<br />
            Customer Care Department
        </p>
        <Quote>
            <b>From:</b> Dean Chilcott [mailto:dean.chilcott@abiuk.co.uk]<br />
            <b>Sent:</b> 23 August 2016 16:39<br />
            <b>To:</b> Charleen Sibley<br />
            <b>Subject:</b> RE: ABI Westwood - 1780073
        </Quote>
        <p>Hi Charleen</p>
        <p>
            Our supplier has now come back and said all they can get is the above. Would you like me to order this.<br />
            Really sorry late getting back to you. If you don’t require or if you would like me to order two for them to match I could do that.
        </p>
        <p>Kind regards</p>
        <p>Dean</p>
        <Quote>
            <b>From:</b> Charleen Sibley [<a href='mailto:charleen@surfbay.co.uk'>mailto:charleen@surfbay.co.uk</a>]<br />
            <b>Sent:</b> 17 August 2016 11:41<br />
            <b>To:</b> Dean Chilcott<br />
            <b>Subject:</b> RE: ABI Westwood - 1780073
        </Quote>
        <p>Hi Dean,</p>
        <p>Do you have any news with regards to this one? Many thanks.</p>
        <p>Kind Regards,</p>
        <Signature $last>Charleen Sibley</Signature>
    </Letterpaper>
);

const TaskbarRow = () => (
    <Taskbar>
        <Wallpaper viewBox="0 0 1920 40" preserveAspectRatio="none" aria-hidden="true">
            <defs>
                <linearGradient id="sky">
                    <stop offset="0" stopColor="#1b5a8e" />
                    <stop offset="0.050" stopColor="#24699f" />
                    <stop offset="0.090" stopColor="#3187bf" />
                    <stop offset="0.160" stopColor="#3a9cd0" />
                    <stop offset="0.260" stopColor="#4fa9d8" />
                    <stop offset="0.350" stopColor="#3b9ad0" />
                    <stop offset="0.450" stopColor="#3387c6" />
                    <stop offset="0.580" stopColor="#2878c0" />
                    <stop offset="0.700" stopColor="#216bb2" />
                    <stop offset="0.800" stopColor="#1d60a8" />
                    <stop offset="0.880" stopColor="#2263a6" />
                    <stop offset="0.900" stopColor="#1d4a7e" />
                    <stop offset="1" stopColor="#143563" />
                </linearGradient>
                <filter id="soft"><feGaussianBlur stdDeviation="3" /></filter>
            </defs>
            <rect width="1920" height="40" fill="url(#sky)" />
            <g filter="url(#soft)" fill="#fff">
                <path d="M20 42L80 0H100L40 42Z" opacity="0.150" />
                <path d="M148 42L170 0H180L158 42Z" fill="#c4e88a" opacity="0.300" />
                <path d="M700 42L820 0H840L720 42Z" opacity="0.120" />
                <path d="M960 0H1040L1060 42H980Z" opacity="0.080" />
                <path d="M1220 0H1300L1360 42H1250Z" opacity="0.080" />
            </g>
            <path d="M1302 0H1320Q1355 20 1380 42H1362Q1336 20 1302 0Z" fill="#b6d9fa" filter="url(#soft)" />
            <rect width="1920" height="1" fill="#fff" opacity="0.400" />
        </Wallpaper>
        <TaskButton $start aria-label='Start'><StartIcon /></TaskButton>
        <TaskButton aria-label='Windows Explorer'><ExplorerIcon /></TaskButton>
        <TaskButton aria-label='Internet Explorer'><ExplorerBrowserIcon /></TaskButton>
        <TaskButton aria-label='Media Player'><MediaIcon /></TaskButton>
        <TaskButton aria-label='Chrome'><ChromeIcon /></TaskButton>
        <TaskButton $open aria-label='Firefox'><FirefoxIcon /></TaskButton>
        <TaskButton $open $current aria-label='Outlook'><OutlookIcon /></TaskButton>
        <Tray>
            <TrayIcons>
                <TrayToggle aria-label='Show hidden icons'><Arrow up color='#fff' width={8} /></TrayToggle>
                <TrayFlagIcon />
                <NetworkIcon />
                <SpeakerIcon />
            </TrayIcons>
            <Clock>11:52<br />24/08/2016</Clock>
            <ShowDesktop aria-label='Show desktop' />
        </Tray>
    </Taskbar>
);

const App = () => {
    const [to, setTo] = useState('Dean Chilcott <dean.chilcott@abiuk.co.uk>');
    const [cc, setCc] = useState('');
    const [subject, setSubject] = useState('RE: ABI Westwood - 1780073');

    return (
        <Window>
            <GlobalStyle />
            <TopBar />
            <RibbonBar />
            <Envelope>
                <SendButton><SendIcon />Send</SendButton>
                <Fields>
                    <FieldButton>From <Arrow color='#4a5a74' /></FieldButton>
                    <FieldText>charleen@surfbay.co.uk</FieldText>
                    <FieldButton>To...</FieldButton>
                    <FieldInput $resolved aria-label='To' value={to} onChange={e => setTo(e.target.value)} />
                    <FieldButton>Cc...</FieldButton>
                    <FieldInput aria-label='Cc' value={cc} onChange={e => setCc(e.target.value)} />
                    <FieldLabel htmlFor='subject'>Subject:</FieldLabel>
                    <FieldInput id='subject' value={subject} onChange={e => setSubject(e.target.value)} />
                </Fields>
            </Envelope>
            <Editor>
                <MessageText />
                <ScrollBar>
                    <ScrollTools>
                        <svg width="9" height="2"><rect width="9" height="2" fill="#7c838c" /></svg>
                        <SelectBrowseIcon />
                    </ScrollTools>
                    <ScrollButton aria-label='Scroll up'><Arrow up color='#3c4a72' width={9} /></ScrollButton>
                    <ScrollTrack>
                        <ScrollThumb><GripIcon /></ScrollThumb>
                    </ScrollTrack>
                    <ScrollButton aria-label='Scroll down'><Arrow color='#3c4a72' width={9} /></ScrollButton>
                </ScrollBar>
            </Editor>
            <Splitter />
            <PeoplePane>
                <InfoIcon />
                <PeopleText>See more about: Dean Chilcott.</PeopleText>
                <Avatar><AvatarIcon /></Avatar>
                <PlainButton aria-label='Expand people pane'><ChevronIcon /></PlainButton>
            </PeoplePane>
            <TaskbarRow />
        </Window>
    );
};

export default App;
